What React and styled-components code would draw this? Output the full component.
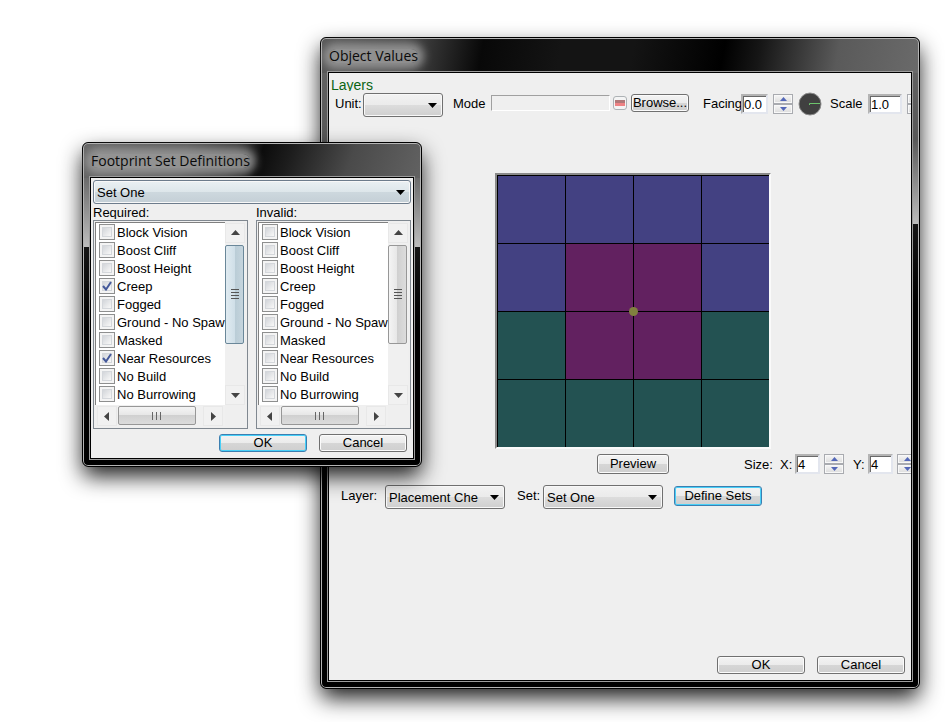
import React from "react";
import styled, { createGlobalStyle, css } from "styled-components";

const GlobalStyle = createGlobalStyle`
  *, *::before, *::after { box-sizing: border-box; }
  html, body { margin: 0; padding: 0; background: #fff; }
  body, button, input, select {
    font-family: "Liberation Sans", Arial, sans-serif;
    font-size: 13px;
    color: #000;
  }
`;

const Desktop = styled.main`
  position: relative;
  height: 100vh;
  min-height: 560px;
  overflow: hidden;
`;

/* ---------- window chrome ---------- */

const Window = styled.section`
  position: absolute;
  display: flex;
  flex-direction: column;
  padding: 1px 7px 7px;
  border: 1px solid #000;
  border-radius: 6px;
  box-shadow: inset 0 0 0 1px #b4b4b4, 0 10px 22px -1px rgba(0, 0, 0, 0.9);
  background:
    ${(p) => p.$sheen} 0 0 / 100% 35px no-repeat,
    linear-gradient(#666 0, #585858 ${(p) => p.$shade - 85}px, #bdbdbd ${(p) => p.$shade}px, #161616 ${(p) => p.$shade}px, #000 ${(p) => p.$shade + 80}px);
`;

const ObjectWindow = styled(Window)`
  left: 320px;
  right: 25px;
  top: 37px;
  bottom: 33px;
`;

const SetsWindow = styled(Window)`
  left: 82px;
  top: 142px;
  width: 340px;
`;

const TitleBar = styled.header`
  display: flex;
  align-items: center;
  height: 33px;
  padding: 1px 1px 0;
`;

const Title = styled.h1`
  margin: 0;
  border-radius: 10px;
  background: rgba(160, 160, 160, 0.8);
  box-shadow: 0 0 8px 6px rgba(160, 160, 160, 0.8);
  font: 400 14px/14px "Open Sans", "Noto Sans", sans-serif;
  color: #0a0a0a;
  white-space: nowrap;
`;

const Client = styled.div`
  display: flex;
  flex-direction: column;
  flex: 1;
  min-height: 0;
  border: 1px solid #000;
  outline: 1px solid #9c9c9c;
  background: #efefef;
  overflow: hidden;
`;

/* ---------- shared controls ---------- */

const Button = styled.button`
  flex: none;
  width: ${(p) => p.$width}px;
  height: ${(p) => p.$height || 18}px;
  padding: 0;
  border: 1px solid #707070;
  border-radius: 3px;
  background: linear-gradient(#f3f3f3 0, #ebebeb 50%, #d6d6d6 50%, #cfcfcf 100%);
  box-shadow: inset 0 0 0 1px #fbfbfb;
  line-height: 16px;
  white-space: nowrap;
  ${(p) =>
    p.$active &&
    css`
      border-color: #3c7fb1;
      box-shadow: inset 0 0 0 1px #48d0f8;
    `}
`;

const SelectFrame = styled.span`
  display: grid;
  flex: none;
  align-items: center;
  width: ${(p) => (p.$width ? `${p.$width}px` : "auto")};
  height: 24px;
`;

const NativeSelect = styled.select`
  grid-area: 1 / 1;
  width: 100%;
  height: 24px;
  padding: 0 20px 0 3px;
  appearance: none;
  border: 1px solid #707070;
  border-radius: 3px;
  background: linear-gradient(#f2f2f2 0, #ebebeb 50%, #dddddd 50%, #cfcfcf 100%);
  box-shadow: inset 0 0 0 1px #f8f8f8;
  ${(p) =>
    p.$cool &&
    css`
      border-color: #6d7c8c;
      background: linear-gradient(#eaf0f3 0, #dde6ea 50%, #cdd8de 50%, #c4cfd6 100%);
    `}
`;

const SelectArrow = styled.svg`
  grid-area: 1 / 1;
  justify-self: end;
  margin-right: 6px;
  pointer-events: none;
`;

function Select({ label, value, width, cool }) {
  return (
    <SelectFrame $width={width}>
      <NativeSelect aria-label={label} defaultValue={value} $cool={cool}>
        <option>{value}</option>
      </NativeSelect>
      <SelectArrow width="9" height="5" viewBox="0 0 9 5" aria-hidden="true">
        <path d="M0 0H9L4.5 5Z" fill="#000" />
      </SelectArrow>
    </SelectFrame>
  );
}

const NumberInput = styled.input`
  flex: none;
  width: ${(p) => p.$width}px;
  height: 20px;
  padding: 0 0 0 1px;
  border: 2px solid;
  border-color: #b4b4b4 #e3e6ee #e3e6ee #b4b4b4;
  border-radius: 0;
  background: #fff;
  box-shadow: inset 1px 1px 0 #696969;
`;

const SpinnerBox = styled.span`
  display: flex;
  flex: none;
  flex-direction: column;
  width: 20px;
  height: 20px;
`;

const SpinnerButton = styled.button`
  display: grid;
  place-items: center;
  height: 10px;
  padding: 0;
  border: 1px solid #a9abb0;
  background: linear-gradient(#f6f6f6, #dcdcdc);
  box-shadow: inset 0 0 0 1px #f8f8f8;
`;

function Spinner({ label }) {
  return (
    <SpinnerBox>
      <SpinnerButton type="button" aria-label={`Increase ${label}`}>
        <svg width="7" height="4" viewBox="0 0 7 4"><path d="M0 4L3.5 0L7 4Z" fill="#5468b8" /></svg>
      </SpinnerButton>
      <SpinnerButton type="button" aria-label={`Decrease ${label}`}>
        <svg width="7" height="4" viewBox="0 0 7 4"><path d="M0 0L3.5 4L7 0Z" fill="#5468b8" /></svg>
      </SpinnerButton>
    </SpinnerBox>
  );
}

const DialogActions = styled.footer`
  display: flex;
  justify-content: flex-end;
  gap: 12px;
  padding: 0 6px 6px;
`;

/* ---------- object values ---------- */

/* The form is wider than the window, so its right edge is cut off. */
const Form = styled.div`
  flex: 1;
  width: calc(100% + 26px);
  min-height: 0;
`;

const SectionName = styled.h2`
  height: 13px;
  margin: 5px 0 2px 2px;
  overflow: hidden;
  font-size: 14px;
  font-weight: 400;
  line-height: 15px;
  color: #0a6414;
`;

const FieldRow = styled.div`
  display: flex;
  align-items: flex-start;
  padding-left: ${(p) => p.$indent}px;
  height: 24px;
`;

const FieldLabel = styled.label`
  flex: none;
  width: ${(p) => p.$width}px;
  margin-left: ${(p) => p.$before || 0}px;
  overflow: hidden;
  line-height: 22px;
  white-space: nowrap;
`;

const AngleGroup = styled.span`
  display: flex;
  flex: none;
  align-items: center;
  gap: 5px;
  height: 22px;
`;

const PathInput = styled.input`
  flex: none;
  width: 119px;
  height: 16px;
  margin: 2px 3px 0 0;
  padding: 0 2px;
  border: 1px solid;
  border-color: #a0a0a0 #fff #fff #a0a0a0;
  background: #efefef;
`;

const ClearButton = styled.button`
  display: grid;
  flex: none;
  place-items: center;
  width: 14px;
  height: 14px;
  margin: 3px 4px 0 0;
  padding: 0;
  border: 1px solid #adb2b5;
  border-radius: 3px;
  background: #f4f4f4;
`;

const BrowseSlot = styled.span`
  display: flex;
  padding-top: 1px;
`;

const GridRow = styled.div`
  display: flex;
  justify-content: center;
  margin-top: 56px;
`;

const Board = styled.div`
  position: relative;
  display: grid;
  grid-template-columns: repeat(4, 68px);
  grid-auto-rows: 68px;
  border: 2px solid;
  border-color: #8a8a8a #fafafa #fafafa #8a8a8a;
`;

const cellColors = { b: "#434182", p: "#622160", g: "#235252" };

const Cell = styled.span`
  border: solid #000;
  border-width: 1px 0 0 1px;
  background: ${(p) => cellColors[p.$kind]};
`;

const Origin = styled.span`
  position: absolute;
  left: calc(50% - 4px);
  top: calc(50% - 4px);
  width: 9px;
  height: 9px;
  border-radius: 50%;
  background: #80803f;
`;

const PreviewRow = styled.div`
  display: grid;
  grid-template-columns: 1fr auto 1fr;
  margin-top: 5px;
`;

const SizeGroup = styled.div`
  display: flex;
  grid-column: 3;
  height: 22px;
  padding-left: 75px;
`;

const PreviewButton = styled(Button)`
  grid-column: 2;
`;

const LayerRow = styled(FieldRow)`
  margin-top: 9px;
`;

const DefineSlot = styled.span`
  display: flex;
  padding: 1px 0 0 11px;
`;

const board = "bbbbbppbgppggggg";

function ObjectValues() {
  return (
    <ObjectWindow
      aria-label="Object Values"
      $shade={186}
      $sheen="linear-gradient(100deg, #585858 0, #4a4a4a 14%, #080808 27%, #141414 40%, #141414 52%, #000 67%, #161616 73%, #5a5a5a 86%, #6a6a6a 100%)"
    >
      <TitleBar><Title>Object Values</Title></TitleBar>
      <Client>
        <Form>
          <SectionName>Layers</SectionName>
          <FieldRow $indent={6}>
            <FieldLabel $width={28}>Unit:</FieldLabel>
            <Select label="Unit" value="" width={80} />
            <FieldLabel $width={38} $before={10} htmlFor="model">Mode</FieldLabel>
            <PathInput id="model" readOnly />
            <ClearButton type="button" aria-label="Clear model">
              <svg width="10" height="6" viewBox="0 0 10 6">
                <path d="M0 0H10V3H0Z" fill="#b07878" />
                <path d="M0 3H10V6H0Z" fill="#ee8284" />
              </svg>
            </ClearButton>
            <BrowseSlot><Button type="button" $width={58}>Browse...</Button></BrowseSlot>
            <FieldLabel $width={38} $before={14} htmlFor="facing">Facing</FieldLabel>
            <AngleGroup>
              <NumberInput id="facing" defaultValue="0.0" $width={27} />
              <Spinner label="facing" />
              <svg width="24" height="24" viewBox="0 0 24 24" aria-hidden="true">
                <circle cx="12" cy="12" r="11" fill="#404040" stroke="#8c8c8c" strokeWidth="1" />
                <path d="M11.5 13V11.5H22" fill="none" stroke="#6cc46c" />
              </svg>
            </AngleGroup>
            <FieldLabel $width={38} $before={8} htmlFor="scale">Scale</FieldLabel>
            <AngleGroup>
              <NumberInput id="scale" defaultValue="1.0" $width={34} />
              <Spinner label="scale" />
            </AngleGroup>
          </FieldRow>

          <GridRow>
            <Board>
              {[...board].map((kind, i) => <Cell key={i} $kind={kind} />)}
              <Origin />
            </Board>
          </GridRow>

          <PreviewRow>
            <PreviewButton type="button" $width={72} $height={20}>Preview</PreviewButton>
            <SizeGroup>
              <FieldLabel as="span" $width={36}>Size:</FieldLabel>
              <FieldLabel $width={15} htmlFor="size-x">X:</FieldLabel>
              <NumberInput id="size-x" defaultValue="4" $width={25} />
              <FieldLabel as="span" $width={4} />
              <Spinner label="width" />
              <FieldLabel $width={15} $before={9} htmlFor="size-y">Y:</FieldLabel>
              <NumberInput id="size-y" defaultValue="4" $width={25} />
              <FieldLabel as="span" $width={4} />
              <Spinner label="height" />
            </SizeGroup>
          </PreviewRow>

          <LayerRow $indent={12}>
            <FieldLabel $width={44}>Layer:</FieldLabel>
            <Select label="Layer" value="Placement Che" width={120} />
            <FieldLabel $width={26} $before={12}>Set:</FieldLabel>
            <Select label="Set" value="Set One" width={120} />
            <DefineSlot><Button type="button" $width={88} $height={20} $active>Define Sets</Button></DefineSlot>
          </LayerRow>
        </Form>
        <DialogActions>
          <Button type="button" $width={88}>OK</Button>
          <Button type="button" $width={88}>Cancel</Button>
        </DialogActions>
      </Client>
    </ObjectWindow>
  );
}

/* ---------- footprint set definitions ---------- */

const SetsBody = styled.div`
  display: flex;
  flex-direction: column;
  padding: 2px 2px 0;
`;

const Columns = styled.div`
  display: grid;
  grid-template-columns: 1fr 1fr;
  gap: 8px;
  padding-bottom: 5px;
`;

const ListLabel = styled.h2`
  height: 14px;
  margin: 1px 0;
  overflow: hidden;
  font-size: 13px;
  font-weight: 400;
  line-height: 16px;
`;

const ListBox = styled.div`
  display: grid;
  grid-template-columns: minmax(0, 1fr) 20px;
  grid-template-rows: 183px 22px;
  height: 209px;
  padding: 1px 2px 1px 1px;
  border: 1px solid #808890;
  background: #efefef;
`;

const Flags = styled.ul`
  margin: 0;
  padding: 0 0 0 3px;
  overflow: hidden;
  border: solid #808080;
  border-width: 1px 0 0 1px;
  background: #fff;
  list-style: none;
`;

const Flag = styled.label`
  display: flex;
  align-items: center;
  gap: 2px;
  height: 18px;
  white-space: nowrap;
`;

const CheckFrame = styled.span`
  display: grid;
  flex: none;
  place-items: center;
  width: 16px;
  height: 16px;
`;

const CheckInput = styled.input`
  grid-area: 1 / 1;
  width: 16px;
  height: 16px;
  margin: 0;
  appearance: none;
  border: 1px solid #8e8f8f;
  background: linear-gradient(135deg, #c4c8ce, #f6f6f6 75%);
  box-shadow: inset 0 0 0 2px #f4f4f4, inset 0 0 0 3px #d4d7db;
`;

const CheckMark = styled.svg`
  grid-area: 1 / 1;
  pointer-events: none;
`;

const ScrollBar = styled.div`
  display: flex;
  flex-direction: ${(p) => (p.$across ? "row" : "column")};
  margin: ${(p) => (p.$across ? "1px 0 0 2px" : "1px 0 0")};
  background: #f0f0f0;
`;

const ScrollButton = styled.button`
  display: grid;
  flex: none;
  place-items: center;
  width: 20px;
  height: 20px;
  padding: 0;
  border: 1px solid #e8e8e8;
  background: #f1f1f1;
`;

const Thumb = styled.button`
  display: grid;
  flex: none;
  place-items: center;
  width: ${(p) => (p.$across ? 78 : 19)}px;
  height: ${(p) => (p.$across ? 19 : 99)}px;
  margin: ${(p) => (p.$across ? "0 7px 0 1px" : "2px 0 auto")};
  padding: 0;
  border: 1px solid ${(p) => (p.$hot ? "#6a8799" : "#979797")};
  border-radius: 2px;
  background: ${(p) =>
    p.$hot
      ? "linear-gradient(90deg, #e0ebf1 0, #d0dfe8 50%, #b9ccd6 50%, #c5d4dd 100%)"
      : `linear-gradient(${p.$across ? 180 : 90}deg, #f4f4f4 0, #e6e6e6 50%, #d0d0d0 50%, #dcdcdc 100%)`};
`;

const arrows = {
  up: "M0 6L4.500 1L9 6Z",
  down: "M0 2L4.500 7L9 2Z",
  left: "M6 0L1 4.500L6 9Z",
  right: "M2 0L7 4.500L2 9Z",
};

function Arrow({ to }) {
  return (
    <ScrollButton type="button" aria-label={`Scroll ${to}`}>
      <svg width="9" height="9" viewBox="0 0 9 9"><path d={arrows[to]} fill="#444" /></svg>
    </ScrollButton>
  );
}

function Grip({ across }) {
  return across ? (
    <svg width="10" height="8" viewBox="0 0 10 8"><path d="M0.500 0V8M4.500 0V8M8.500 0V8" stroke="#666" /></svg>
  ) : (
    <svg width="8" height="11" viewBox="0 0 8 11"><path d="M0 0.500H8M0 3.500H8M0 6.500H8M0 9.500H8" stroke="#555" /></svg>
  );
}

const flags = [
  "Block Vision",
  "Boost Cliff",
  "Boost Height",
  "Creep",
  "Fogged",
  "Ground - No Spaw",
  "Masked",
  "Near Resources",
  "No Build",
  "No Burrowing",
];

function FlagList({ title, checked = [], hot }) {
  return (
    <div>
      <ListLabel>{title}</ListLabel>
      <ListBox>
        <Flags>
          {flags.map((name) => (
            <li key={name}>
              <Flag>
                <CheckFrame>
                  <CheckInput type="checkbox" defaultChecked={checked.includes(name)} />
                  {checked.includes(name) && (
                    <CheckMark width="10" height="10" viewBox="0 0 10 10" aria-hidden="true">
                      <path d="M1 5L4 8.500L9 1" fill="none" stroke="#45599a" strokeWidth="2" />
                    </CheckMark>
                  )}
                </CheckFrame>
                {name}
              </Flag>
            </li>
          ))}
        </Flags>
        <ScrollBar>
          <Arrow to="up" />
          <Thumb type="button" aria-label={`${title} vertical position`} $hot={hot}><Grip /></Thumb>
          <Arrow to="down" />
        </ScrollBar>
        <ScrollBar $across>
          <Arrow to="left" />
          <Thumb type="button" aria-label={`${title} horizontal position`} $across><Grip across /></Thumb>
          <Arrow to="right" />
        </ScrollBar>
      </ListBox>
    </div>
  );
}

function FootprintSets() {
  return (
    <SetsWindow
      role="dialog"
      aria-label="Footprint Set Definitions"
      $shade={104}
      $sheen="linear-gradient(110deg, #666 0, #585858 30%, #3a3a3a 44%, #0c0c0c 52%, #1c1c1c 60%, #4a4a4a 78%, #626262 100%)"
    >
      <TitleBar><Title>Footprint Set Definitions</Title></TitleBar>
      <Client>
        <SetsBody>
          <Select label="Footprint set" value="Set One" cool />
          <Columns>
            <FlagList title="Required:" checked={["Creep", "Near Resources"]} hot />
            <FlagList title="Invalid:" />
          </Columns>
        </SetsBody>
        <DialogActions>
          <Button type="button" $width={88} $active>OK</Button>
          <Button type="button" $width={88}>Cancel</Button>
        </DialogActions>
      </Client>
    </SetsWindow>
  );
}

export default function App() {
  return (
    <>
      <GlobalStyle />
      <Desktop>
        <ObjectValues />
        <FootprintSets />
      </Desktop>
    </>
  );
}
